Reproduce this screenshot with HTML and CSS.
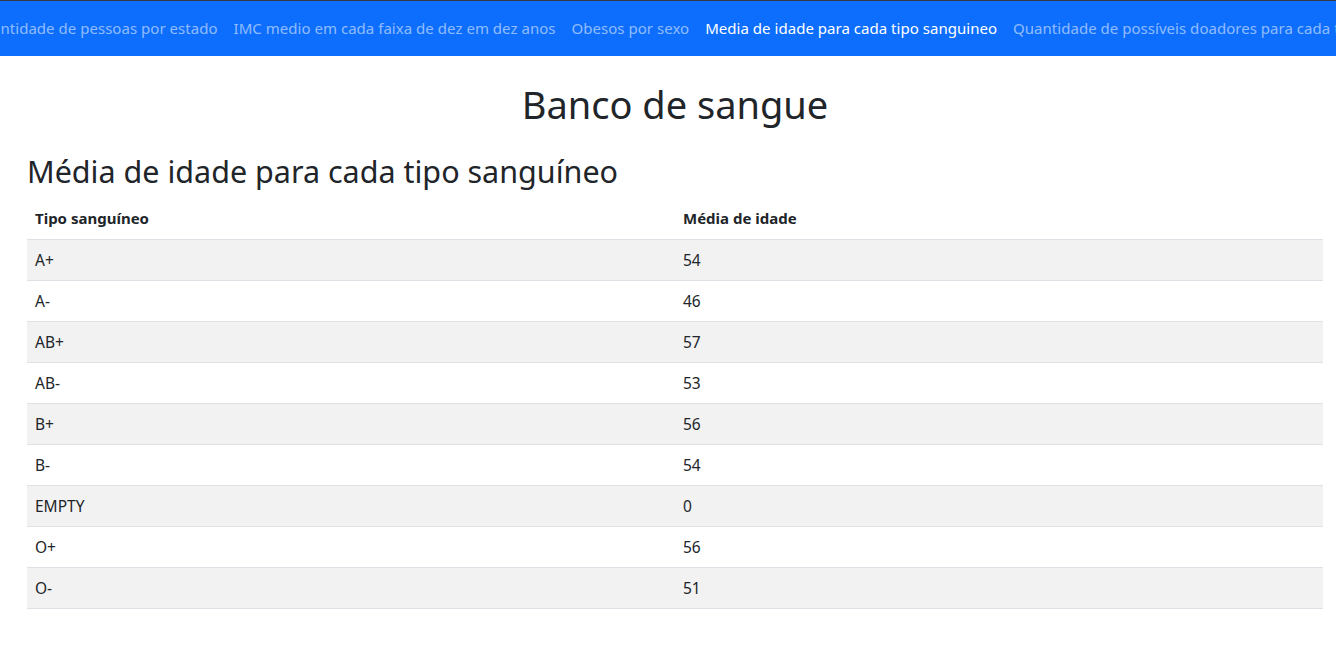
FILE: index.html
```html
<!DOCTYPE html>
<html lang="pt">
<head>
<meta charset="utf-8">
<title>Banco de sangue</title>
<link rel="stylesheet" href="styles.css">
</head>
<body>
<nav class="navbar">
  <ul class="nav-list">
    <li><a class="nav-link" href="#">Quantidade de pessoas por estado</a></li>
    <li><a class="nav-link" href="#">IMC medio em cada faixa de dez em dez anos</a></li>
    <li><a class="nav-link" href="#">Obesos por sexo</a></li>
    <li><a class="nav-link active" href="#">Media de idade para cada tipo sanguineo</a></li>
    <li><a class="nav-link" href="#">Quantidade de possíveis doadores para cada tipo sanguíneo receptor</a></li>
  </ul>
</nav>
<main class="content">
  <h1 class="title">Banco de sangue</h1>
  <h2 class="subtitle">Média de idade para cada tipo sanguíneo</h2>
  <table class="data-table">
    <thead>
      <tr><th>Tipo sanguíneo</th><th>Média de idade</th></tr>
    </thead>
    <tbody>
      <tr><td>A+</td><td>54</td></tr>
      <tr><td>A-</td><td>46</td></tr>
      <tr><td>AB+</td><td>57</td></tr>
      <tr><td>AB-</td><td>53</td></tr>
      <tr><td>B+</td><td>56</td></tr>
      <tr><td>B-</td><td>54</td></tr>
      <tr><td>EMPTY</td><td>0</td></tr>
      <tr><td>O+</td><td>56</td></tr>
      <tr><td>O-</td><td>51</td></tr>
    </tbody>
  </table>
</main>
</body>
</html>
```
FILE: styles.css
```css
* { box-sizing: border-box; }
html, body { margin: 0; padding: 0; }
body {
  font-family: "Noto Sans", "Open Sans", sans-serif;
  color: #212529;
  background: #fff;
  font-size: 16px;
  line-height: 24px;
  overflow: hidden;
}
.navbar {
  border-top: 1px solid #343a40;
  background: #0d6efd;
  height: 56px;
  display: flex;
  align-items: center;
  overflow: hidden;
}
.nav-list {
  list-style: none;
  margin: -2px 0 0 -37px;
  padding: 0;
  display: flex;
  flex-wrap: nowrap;
  white-space: nowrap;
}
.nav-link {
  display: block;
  padding: 0 8px;
  color: rgba(255,255,255,.55);
  text-decoration: none;
  font-size: 15px;
  letter-spacing: 0.03px;
  line-height: 24px;
}
.nav-link.active { color: #fff; }
.content {
  padding: 0 13px 0 27px;
}
.title {
  margin: 24px 0 0;
  text-align: center;
  font-size: 38px;
  font-weight: 400;
  line-height: 48px;
}
.subtitle {
  margin: 24px 0 0;
  font-size: 30.5px;
  font-weight: 400;
  line-height: 38px;
}
.data-table {
  width: 100%;
  border-collapse: collapse;
  margin-top: 8px;
  table-layout: fixed;
}
.data-table th, .data-table td {
  text-align: left;
  padding: 8px;
  border-bottom: 1px solid #dee2e6;
  font-size: 15.5px;
}
.data-table th { font-weight: 700; font-size: 15px; padding-bottom: 9px; }
.data-table tbody tr:nth-child(odd) td { background: #f2f2f2; }
```
